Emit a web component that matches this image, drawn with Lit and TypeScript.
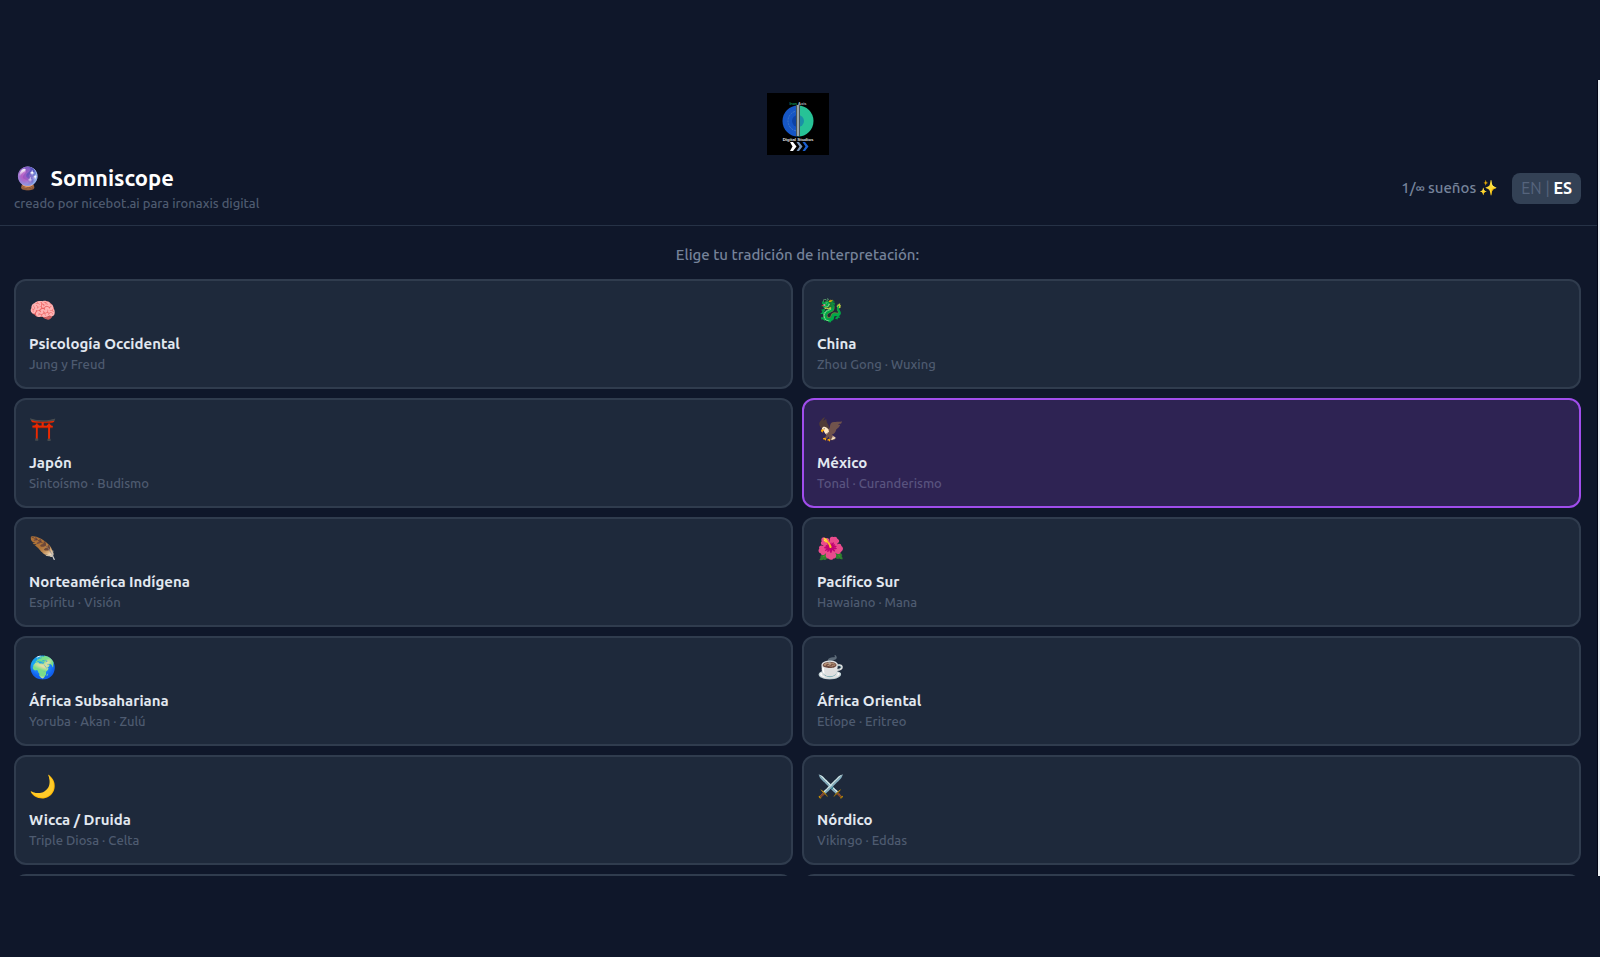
import { LitElement, html, css, svg } from "lit";
import { customElement, property, state } from "lit/decorators.js";
import { classMap } from "lit/directives/class-map.js";

interface Tradition {
  id: string;
  icon: string;
  name: string;
  detail: string;
}

const TRADITIONS: Tradition[] = [
  { id: "western", icon: "🧠", name: "Psicología Occidental", detail: "Jung y Freud" },
  { id: "china", icon: "🐉", name: "China", detail: "Zhou Gong · Wuxing" },
  { id: "japan", icon: "⛩️", name: "Japón", detail: "Sintoísmo · Budismo" },
  { id: "mexico", icon: "🦅", name: "México", detail: "Tonal · Curanderismo" },
  { id: "north", icon: "🪶", name: "Norteamérica Indígena", detail: "Espíritu · Visión" },
  { id: "pacific", icon: "🌺", name: "Pacífico Sur", detail: "Hawaiano · Mana" },
  { id: "subsaharan", icon: "🌍", name: "África Subsahariana", detail: "Yoruba · Akan · Zulú" },
  { id: "east", icon: "☕", name: "África Oriental", detail: "Etíope · Eritreo" },
  { id: "wicca", icon: "🌙", name: "Wicca / Druida", detail: "Triple Diosa · Celta" },
  { id: "norse", icon: "⚔️", name: "Nórdico", detail: "Vikingo · Eddas" },
];

@customElement("studio-logo")
export class StudioLogo extends LitElement {
  static styles = css`
    :host { display: block; width: 62px; height: 62px; }
    svg { display: block; width: 100%; height: 100%; }
    text { font-family: "Liberation Sans", sans-serif; font-weight: 700; }
  `;
  render() {
    return html`<svg viewBox="0 0 62 62" role="img" aria-label="Digital Studios">
      <rect width="62" height="62" fill="#000" />
      <text x="31" y="11.5" font-size="4" text-anchor="middle" fill="#b8bcc0"><tspan fill="#109a5c">Iron</tspan> Axis</text>
      <path d="M31 12.500a15.500 15.500 0 0 0 0 31z" fill="#1656c4" />
      <path d="M31 12.500a15.500 15.500 0 0 1 0 31z" fill="#27c296" />
      <path d="M31 18a10 10 0 0 0 0 20" fill="none" stroke="#3f78c4" stroke-width="1" stroke-dasharray="2 1" />
      <path d="M31 22a6 6 0 0 0 0 12z" fill="#0d43a4" />
      <path d="M31 22a6 6 0 0 1 0 12z" fill="#1b8fa6" />
      <rect x="29" y="12" width="4" height="31" fill="#222f33" />
      <rect x="29.7" y="12" width="2.6" height="31" fill="#9aa5a6" />
      <text x="31" y="47.5" font-size="4.4" text-anchor="middle" fill="#e4e4e4">Digital Studios</text>
      ${svg`
        <path d="M23 49h3l3.500 4.500-3.500 4.500h-3l2.500-4.500z" fill="#fff" />
        <path d="M29.500 49h2.500l3.500 4.500-3.500 4.500h-2.500l3-4.500z" fill="#7894b8" />
        <path d="M35.500 49h2.500l3.500 4.500-3.500 4.500h-2.500l3-4.500z" fill="#1b5fd0" />`}
    </svg>`;
  }
}

@customElement("tradition-card")
export class TraditionCard extends LitElement {
  @property({ attribute: false }) item!: Tradition;
  @property({ type: Boolean }) selected = false;

  static styles = css`
    :host { display: block; min-width: 0; }
    .card {
      display: flex;
      flex-direction: column;
      width: 100%;
      box-sizing: border-box;
      padding: 13px;
      border: 2px solid #303c4e;
      border-radius: 12px;
      background: #1e293b;
      text-align: left;
      font-family: inherit;
      cursor: pointer;
    }
    .selected { background: #2e2353; border-color: #a04deb; }
    .icon { font-size: 22px; line-height: 32px; margin-bottom: 7px; color: #e2e8f0; }
    .name { font-size: 15px; line-height: 22px; font-weight: 600; color: #e2e8f0; }
    .detail { font-size: 13px; line-height: 19px; font-weight: 500; color: #4e5b70; }
    .selected .detail { color: #59537f; }
  `;

  render() {
    return html`<button
      class=${classMap({ card: true, selected: this.selected })}
      aria-pressed=${this.selected ? "true" : "false"}
    >
      <span class="icon" aria-hidden="true">${this.item.icon}</span>
      <span class="name">${this.item.name}</span>
      <span class="detail">${this.item.detail}</span>
    </button>`;
  }
}

@customElement("app-root")
export class AppRoot extends LitElement {
  @state() private chosen = "mexico";

  static styles = css`
    :host {
      display: block;
      box-sizing: border-box;
      height: 100vh;
      padding: 80px 0 81px;
      background: #0f172a;
      font-family: Ubuntu, "Noto Sans", "Noto Color Emoji", sans-serif;
    }
    .page {
      height: 100%;
      box-sizing: border-box;
      overflow: hidden;
      border-right: 2px solid #eef2f4;
    }
    .scroll { border-right: 1px solid #020617; }
    .brand { display: flex; justify-content: center; padding: 13px 16px 0 14px; }
    .header {
      display: flex;
      align-items: center;
      justify-content: space-between;
      padding: 8px 16px 12px 14px;
      border-bottom: 1px solid #263246;
    }
    .title {
      display: flex;
      gap: 9px;
      margin: 0;
      font-size: 22px;
      line-height: 30px;
      font-weight: 600;
      color: #fff;
    }
    .tagline { margin: 0; font-size: 13px; line-height: 20px; font-weight: 500; color: #4e5b70; }
    .tools { display: flex; align-items: center; gap: 14px; }
    .count { font-size: 15px; line-height: 22px; font-weight: 500; color: #76839a; }
    .lang {
      padding: 4px 9px;
      border: 0;
      border-radius: 8px;
      background: #334155;
      font-family: inherit;
      font-size: 16px;
      line-height: 23px;
      color: #56647c;
      cursor: pointer;
    }
    .current { font-weight: 700; color: #fff; }
    .prompt {
      margin: 0;
      padding: 18px 16px 13px 14px;
      text-align: center;
      font-size: 15px;
      line-height: 22px;
      font-weight: 500;
      color: #76839a;
    }
    .grid {
      display: grid;
      grid-template-columns: 1fr 1fr;
      gap: 9px;
      padding: 0 16px 0 14px;
    }
    .next {
      height: 110px;
      box-sizing: border-box;
      border: 2px solid #303c4e;
      border-radius: 12px;
      background: #1e293b;
    }
  `;

  render() {
    return html`<div class="page">
      <div class="scroll">
        <div class="brand"><studio-logo></studio-logo></div>
        <header class="header">
          <div>
            <h1 class="title"><span aria-hidden="true">🔮</span>Somniscope</h1>
            <p class="tagline">creado por nicebot.ai para ironaxis digital</p>
          </div>
          <div class="tools">
            <span class="count">1/∞ sueños ✨</span>
            <button class="lang">EN | <span class="current">ES</span></button>
          </div>
        </header>
        <main>
          <h2 class="prompt">Elige tu tradición de interpretación:</h2>
          <div class="grid">
            ${TRADITIONS.map(
              (t) => html`<tradition-card
                .item=${t}
                ?selected=${t.id === this.chosen}
                @click=${() => (this.chosen = t.id)}
              ></tradition-card>`
            )}
            <div class="next"></div>
            <div class="next"></div>
          </div>
        </main>
      </div>
    </div>`;
  }
}
